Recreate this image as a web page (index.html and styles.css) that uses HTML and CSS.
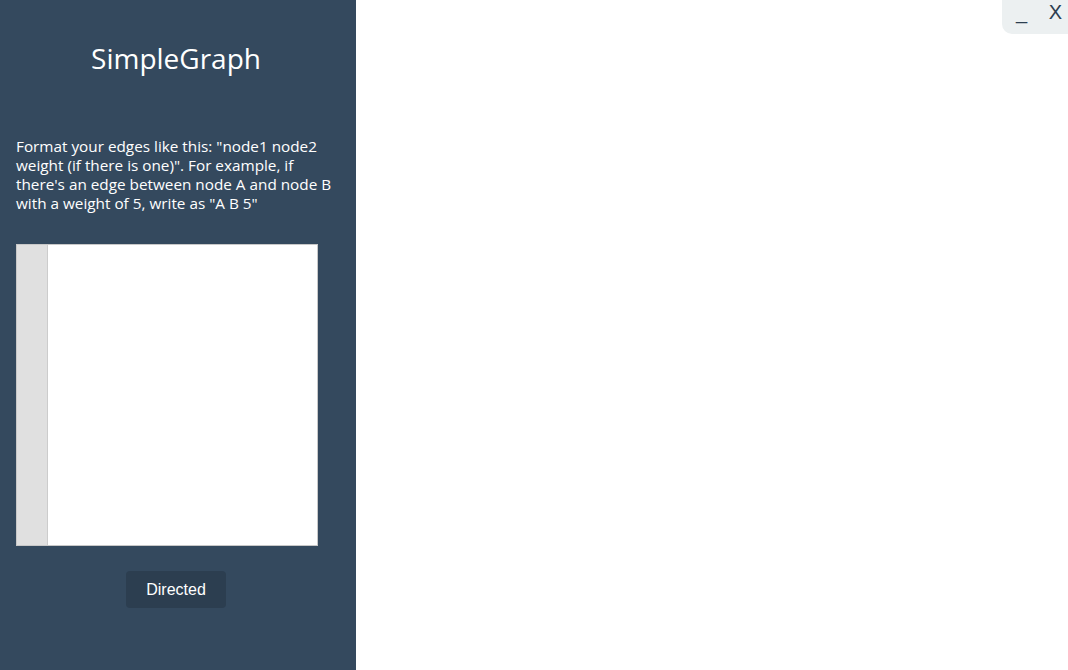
FILE: index.html
```html
<!DOCTYPE html>
<html>
<head>
<meta charset="utf-8">
<link rel="stylesheet" href="styles.css">
</head>
<body>
<div class="app">
  <aside class="sidebar">
    <h1 class="title">SimpleGraph</h1>
    <p class="hint">Format your edges like this: "node1 node2 weight (if there is one)". For example, if there's an edge between node A and node B with a weight of 5, write as "A B 5"</p>
    <div class="editor">
      <div class="gutter"></div>
      <div class="input"></div>
    </div>
    <div class="actions">
      <button class="btn">Directed</button>
    </div>
  </aside>
  <main class="canvas"></main>
  <div class="winctl">
    <span class="ctl">_</span>
    <span class="ctl">X</span>
  </div>
</div>
</body>
</html>
```

FILE: styles.css
```css
html, body {
  margin: 0;
  padding: 0;
  height: 100%;
}
body {
  font-family: "Open Sans", "DejaVu Sans", sans-serif;
  background: #ffffff;
}
.app {
  display: flex;
  height: 670px;
  position: relative;
}
.sidebar {
  width: 356px;
  flex: none;
  background: #34495e;
  color: #ffffff;
  box-sizing: border-box;
  padding: 0 16px;
  display: flex;
  flex-direction: column;
}
.title {
  margin: 38px 4px 0 0;
  font-weight: normal;
  font-size: 28px;
  line-height: 40px;
  text-align: center;
}
.hint {
  margin: 59px 0 0;
  font-size: 15.3px;
  line-height: 19px;
  width: 320px;
}
.editor {
  margin-top: 31px;
  width: 302px;
  height: 302px;
  box-sizing: border-box;
  border: 1px solid #c8c8c8;
  background: #ffffff;
  display: flex;
}
.gutter {
  width: 30px;
  background: #e0e0e0;
  border-right: 1px solid #cccccc;
}
.input {
  flex: 1;
}
.actions {
  display: flex;
  justify-content: center;
  margin-top: 25px;
  width: 320px;
}
.btn {
  width: 100px;
  height: 37px;
  border: none;
  border-radius: 4px;
  background: #2c3e50;
  color: #ffffff;
  font-family: "Liberation Sans", Arial, sans-serif;
  font-size: 16px;
  padding: 0;
}
.canvas {
  flex: 1;
}
.winctl {
  position: absolute;
  top: 0;
  right: 0;
  width: 66px;
  height: 34px;
  background: #ecf0f1;
  border-bottom-left-radius: 10px;
  display: flex;
  align-items: flex-start;
  justify-content: space-between;
  box-sizing: border-box;
  padding: 0 6px 0 14px;
  color: #2c3e50;
  font-family: "Liberation Sans", Arial, sans-serif;
  font-size: 20px;
  line-height: 24px;
}
.ctl {
  display: block;
}
```
